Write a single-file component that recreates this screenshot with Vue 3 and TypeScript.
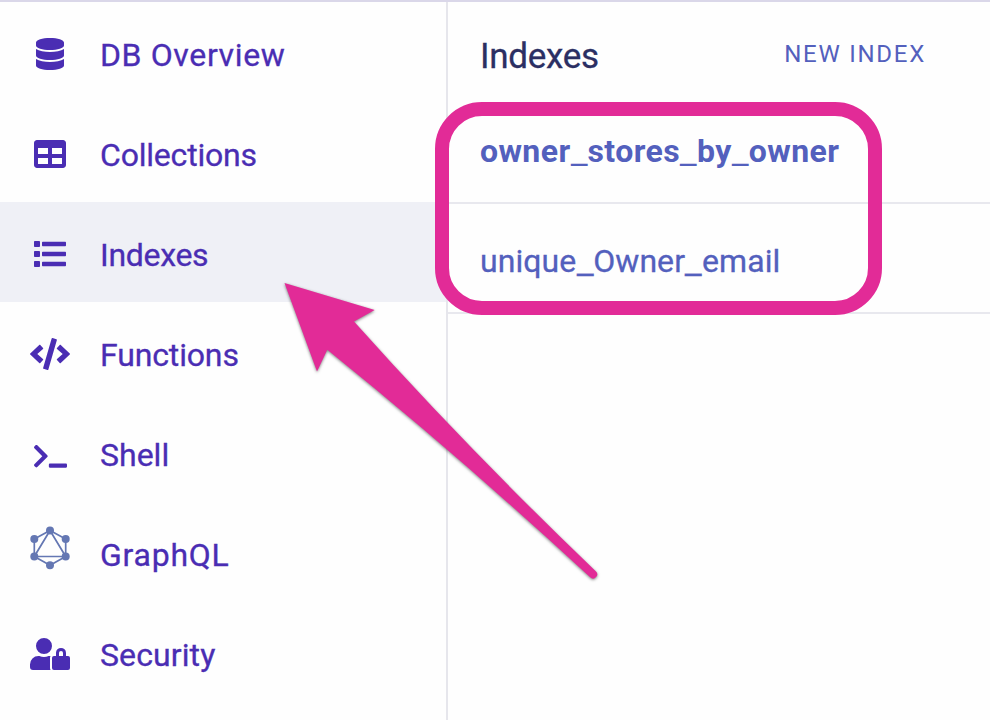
<script setup lang="ts">
interface NavItem {
  id: string
  label: string
  viewBox: string
  path?: string
}

const items: NavItem[] = [
  {
    id: 'overview',
    label: 'DB Overview',
    viewBox: '0 0 448 512',
    path: 'M448 73.143v45.714C448 159.143 347.667 192 224 192S0 159.143 0 118.857V73.143C0 32.857 100.333 0 224 0s224 32.857 224 73.143zM448 176v102.857C448 319.143 347.667 352 224 352S0 319.143 0 278.857V176c48.125 33.143 136.208 48.572 224 48.572S399.874 209.143 448 176zm0 160v102.857C448 479.143 347.667 512 224 512S0 479.143 0 438.857V336c48.125 33.143 136.208 48.572 224 48.572S399.874 369.143 448 336z',
  },
  {
    id: 'collections',
    label: 'Collections',
    viewBox: '0 0 512 512',
    path: 'M464 32H48C21.49 32 0 53.49 0 80v352c0 26.51 21.49 48 48 48h416c26.51 0 48-21.49 48-48V80c0-26.51-21.49-48-48-48zM224 416H64v-96h160v96zm0-160H64v-96h160v96zm224 160H288v-96h160v96zm0-160H288v-96h160v96z',
  },
  {
    id: 'indexes',
    label: 'Indexes',
    viewBox: '0 0 512 512',
    path: 'M128 116V76c0-8.837 7.163-16 16-16h352c8.837 0 16 7.163 16 16v40c0 8.837-7.163 16-16 16H144c-8.837 0-16-7.163-16-16zm0 160v-40c0-8.837 7.163-16 16-16h352c8.837 0 16 7.163 16 16v40c0 8.837-7.163 16-16 16H144c-8.837 0-16-7.163-16-16zm0 160v-40c0-8.837 7.163-16 16-16h352c8.837 0 16 7.163 16 16v40c0 8.837-7.163 16-16 16H144c-8.837 0-16-7.163-16-16zM16 144h64c8.837 0 16-7.163 16-16V64c0-8.837-7.163-16-16-16H16C7.163 48 0 55.163 0 64v64c0 8.837 7.163 16 16 16zm0 160h64c8.837 0 16-7.163 16-16v-64c0-8.837-7.163-16-16-16H16c-8.837 0-16 7.163-16 16v64c0 8.837 7.163 16 16 16zm0 160h64c8.837 0 16-7.163 16-16v-64c0-8.837-7.163-16-16-16H16c-8.837 0-16 7.163-16 16v64c0 8.837 7.163 16 16 16z',
  },
  {
    id: 'functions',
    label: 'Functions',
    viewBox: '0 0 640 512',
    path: 'M278.9 511.5l-61-17.7c-6.4-1.8-10-8.5-8.2-14.9L346.2 8.7c1.8-6.4 8.5-10 14.9-8.2l61 17.7c6.4 1.8 10 8.5 8.2 14.9L293.8 503.3c-1.9 6.4-8.5 10.1-14.9 8.2zm-114-112.2l43.5-46.4c4.6-4.9 4.3-12.7-.8-17.2L117 256l90.6-79.7c5.1-4.5 5.5-12.3.8-17.2l-43.5-46.4c-4.5-4.8-12.1-5.1-17-.5L3.8 247.2c-5.1 4.7-5.1 12.8 0 17.5l144.1 135.1c4.9 4.6 12.5 4.4 17-.5zm327.2.6l144.1-135.1c5.1-4.7 5.1-12.8 0-17.5L492.1 112.1c-4.8-4.5-12.4-4.3-17 .5L431.6 159c-4.6 4.9-4.3 12.7.8 17.2L523 256l-90.6 79.7c-5.1 4.5-5.5 12.3-.8 17.2l43.5 46.4c4.5 4.9 12.1 5.1 17 .6z',
  },
  {
    id: 'shell',
    label: 'Shell',
    viewBox: '0 0 640 512',
    path: 'M257.981 272.971L63.638 467.314c-9.373 9.373-24.569 9.373-33.941 0L7.029 444.647c-9.357-9.357-9.375-24.522-.04-33.901L161.011 256 6.99 101.255c-9.335-9.379-9.317-24.544.04-33.901l22.667-22.667c9.373-9.373 24.569-9.373 33.941 0L257.981 239.03c9.373 9.372 9.373 24.568 0 33.941zM640 456v-32c0-13.255-10.745-24-24-24H312c-13.255 0-24 10.745-24 24v32c0 13.255 10.745 24 24 24h304c13.255 0 24-10.745 24-24z',
  },
  { id: 'graphql', label: 'GraphQL', viewBox: '0 0 40 44' },
  {
    id: 'security',
    label: 'Security',
    viewBox: '0 0 640 512',
    path: 'M224 256A128 128 0 1 0 96 128a128 128 0 0 0 128 128zm96 64a63.08 63.08 0 0 1 8.1-30.5c-4.8-.5-9.5-1.5-14.5-1.5h-16.7a174.08 174.08 0 0 1-145.8 0h-16.7A134.43 134.43 0 0 0 0 422.4V464a48 48 0 0 0 48 48h280.9a63.54 63.54 0 0 1-8.9-32zm288-32h-32v-50a80 80 0 0 0-160 0v50h-32a32 32 0 0 0-32 32v160a32 32 0 0 0 32 32h224a32 32 0 0 0 32-32V320a32 32 0 0 0-32-32zm-80 0h-64v-50a32 32 0 0 1 64 0z',
  },
]

const indexes = ['owner_stores_by_owner', 'unique_Owner_email']
const pieces = (name: string): string[] => name.split(/(_)/)

const nodes: [number, number][] = [
  [20, 4.5], [35.7, 13], [35.7, 30.5], [20, 39.3], [4.3, 30.5], [4.3, 13],
]
const active = 'indexes'
</script>

<template>
  <div class="page">
    <nav class="sidebar">
      <a
        v-for="item in items"
        :key="item.id"
        class="nav-item"
        :class="{ active: item.id === active }"
      >
        <span class="slot">
          <svg class="icon" :class="'icon-' + item.id" :viewBox="item.viewBox">
            <path v-if="item.path" :d="item.path" fill="currentColor" />
            <g v-else>
              <path
                d="M20 4.5L35.7 13V30.5L20 39.3L4.3 30.5V13ZM20 4.5L35.7 30.5H4.3Z"
                fill="none"
                stroke="currentColor"
                stroke-width="1.7"
              />
              <circle v-for="(n, i) in nodes" :key="i" :cx="n[0]" :cy="n[1]" r="4" fill="currentColor" />
            </g>
          </svg>
        </span>
        <span class="label" :class="'label-' + item.id">{{ item.label }}</span>
      </a>
    </nav>
    <main class="panel">
      <header class="head">
        <h1 class="title">Indexes</h1>
        <a class="new">NEW INDEX</a>
      </header>
      <a v-for="(name, r) in indexes" :key="name" class="row" :class="{ selected: r === 0 }">
        <span><span v-for="(p, i) in pieces(name)" :key="i" :class="{ bar: p === '_' }">{{ p }}</span></span>
      </a>
    </main>
    <div class="highlight"></div>
    <svg class="arrow" viewBox="270 270 340 320">
      <path
        d="M284.5 283L374.7 310L354 321.6Q467 448 595.8 571.2A4 4 0 0 1 590.2 577.3Q458 455 327.3 349.8L317 371.5Z"
        fill="#e22b97"
      />
    </svg>
  </div>
</template>

<style>
body {
  margin: 0;
  background: #fefefe;
  overflow: hidden;
}
</style>

<style scoped>
.page {
  position: relative;
  box-sizing: border-box;
  width: 990px;
  height: 720px;
  border-top: 2px solid #dad7e9;
  display: flex;
  overflow: hidden;
  background: #fefefe;
  font-family: Roboto, "Liberation Sans", sans-serif;
}
.sidebar {
  box-sizing: border-box;
  width: 448px;
  flex: none;
  border-right: 2px solid #e6e6ec;
}
.nav-item {
  display: flex;
  align-items: center;
  height: 100px;
  padding-left: 30px;
  color: #4a2db3;
}
.nav-item.active {
  background: #eff0f6;
}
.slot {
  display: flex;
  justify-content: center;
  width: 40px;
  margin-right: 30px;
  padding-top: 4px;
}
.icon {
  display: block;
  height: 32px;
  flex: none;
}
.icon-overview { width: 28px; }
.icon-collections, .icon-indexes { width: 32px; }
.icon-functions, .icon-security { width: 40px; }
.icon-shell {
  width: 33px;
  height: 26.4px;
  margin-top: 5px;
}
.icon-graphql {
  width: 40px;
  height: 44px;
  margin-bottom: 12px;
  color: #6477b3;
}
.label {
  font-size: 32px;
  line-height: 40px;
  padding-top: 6px;
  white-space: nowrap;
  -webkit-text-stroke: 0.3px currentColor;
}
.label-overview { letter-spacing: 0.62px; }
.label-collections { letter-spacing: -0.2px; }
.label-indexes { letter-spacing: -0.3px; }
.label-functions { letter-spacing: -0.15px; }
.label-graphql { letter-spacing: 0.75px; }
.label-security { letter-spacing: 0.1px; }
.panel {
  flex: 1;
}
.head {
  box-sizing: border-box;
  height: 90px;
  display: flex;
  justify-content: space-between;
  padding: 0 64px 0 32px;
}
.title {
  margin: 35px 0 0;
  font-size: 35px;
  line-height: 40px;
  font-weight: 400;
  letter-spacing: -0.3px;
  color: #2b2f63;
  -webkit-text-stroke: 0.3px currentColor;
}
.new {
  margin-top: 37px;
  font-size: 24px;
  line-height: 30px;
  letter-spacing: 1.75px;
  color: #5360bd;
}
.row {
  box-sizing: border-box;
  display: flex;
  align-items: center;
  height: 110px;
  padding: 6px 0 0 32px;
  border-bottom: 2px solid #e8e8ee;
  font-size: 32px;
  line-height: 40px;
  letter-spacing: 0.05px;
  color: #5360bd;
  -webkit-text-stroke: 0.3px currentColor;
}
.row.selected {
  height: 112px;
  padding-top: 10px;
  padding-bottom: 2px;
  font-weight: 700;
  letter-spacing: 0.4px;
  -webkit-text-stroke: 0;
}
.bar {
  display: inline-block;
  margin: 0 1.3px;
  font-weight: 400;
  letter-spacing: 0;
  transform: translateY(2px) scaleX(1.17);
}
.highlight {
  position: absolute;
  box-sizing: border-box;
  left: 435px;
  top: 100px;
  width: 446.5px;
  height: 213px;
  border: 14px solid #e22b97;
  border-radius: 47px;
}
.arrow {
  position: absolute;
  left: 270px;
  top: 268px;
  width: 340px;
  height: 320px;
  filter: drop-shadow(0 1.5px 1.5px rgba(0, 0, 0, 0.5));
}
</style>
